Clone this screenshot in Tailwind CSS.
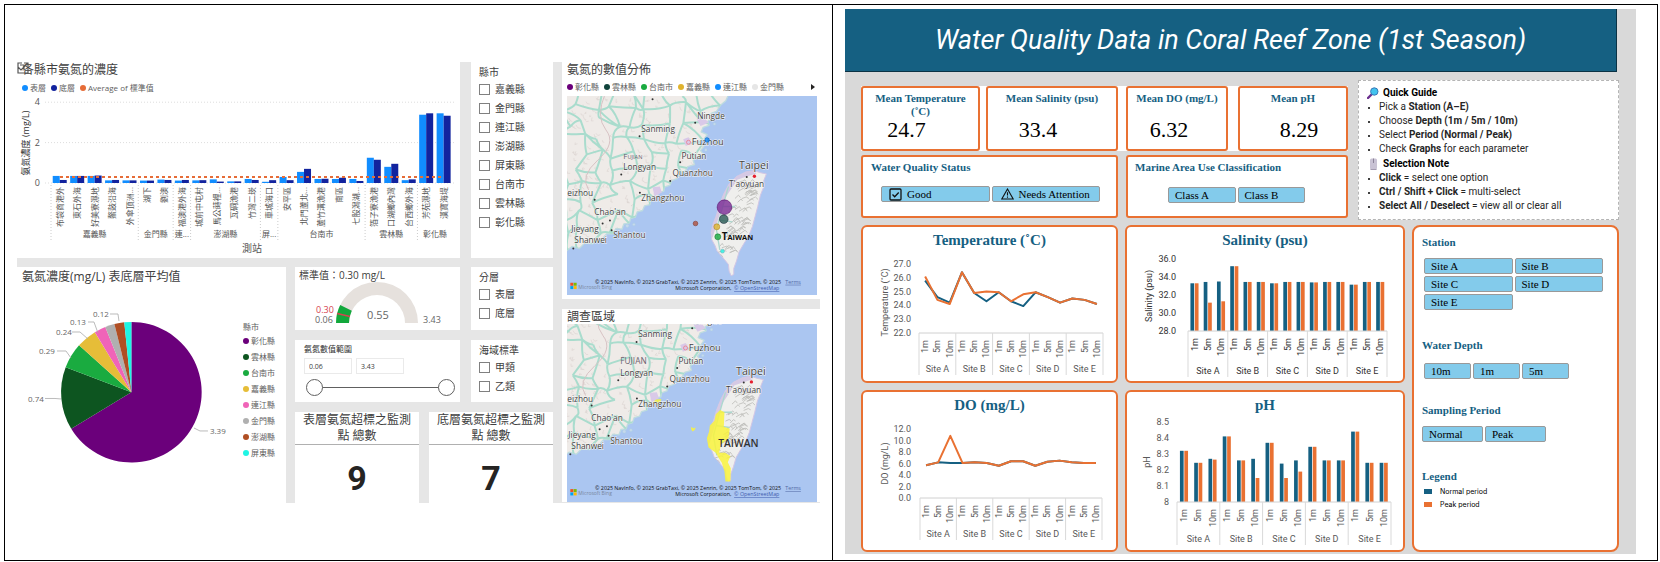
<!DOCTYPE html>
<html lang="zh-Hant">
<head>
<meta charset="utf-8">
<meta name="viewport" content="width=device-width, initial-scale=1">
<title>Water quality dashboards</title>
<script src="https://cdn.jsdelivr.net/npm/@tailwindcss/browser@4"></script>
</head>
<body class="bg-white">
<main class="mt-1 mr-[2px] ml-1 grid grid-cols-[828fr_824fr] border border-black">

  <section class="border-r border-black pt-[57px] pr-[12px] pb-[57px] pl-[12px] font-['Open_Sans','Noto_Sans_CJK_TC',sans-serif] text-[#404040]" aria-label="氨氮">
    <div class="grid grid-cols-[536fr_258fr] gap-[9px] bg-[#e6e6e6]">
      <div class="flex flex-col gap-[9px]">
        <div class="grid grid-cols-[443fr_82fr] gap-[11px]">
          <div class="relative bg-white">
            <svg class="absolute top-0 left-0 h-3 w-3" viewBox="0 0 12 12" fill="none" stroke="#555" stroke-width="1.2"><path d="M5 1H1V11H11V7M1 5L4 8L11 1M7 1H11V5M3 3H7V7"/></svg>
            <h2 class="pl-[5px] text-[12px] leading-4 font-normal">各縣市氨氮的濃度</h2>
            <ul class="flex h-5 items-center gap-[5px] pl-[5px] text-[8px] leading-3 text-[#606060]">
              <li class="flex items-center gap-[2px]"><i class="size-[6px] rounded-full bg-[#118dff]"></i>表層</li>
              <li class="flex items-center gap-[2px]"><i class="size-[6px] rounded-full bg-[#12239e]"></i>底層</li>
              <li class="flex items-center gap-[2px]"><i class="size-[6px] rounded-full bg-[#e66c37]"></i>Average of 標準值</li>
            </ul>
            <svg id="stations" class="block w-full" viewBox="17 98 443 160" font-size="8" fill="#555"></svg>
          </div>
          <fieldset class="bg-white pt-[2px] pl-2 text-[10px]">
            <legend class="float-left w-full leading-4">縣市</legend>
            <div id="counties" class="clear-both"></div>
          </fieldset>
        </div>

        <div class="grid grid-cols-[269fr_258fr] gap-[9px]">
          <div class="bg-white">
            <h2 class="pt-[2px] pl-[5px] text-[12px] leading-4 font-normal">氨氮濃度(mg/L) 表底層平均值</h2>
            <div class="flex">
              <svg id="pie" class="block w-[84%]" viewBox="17 285 226 218" font-size="8" fill="#666"></svg>
              <div class="pt-9 text-[8px] leading-4 text-[#606060]">
                <p class="leading-3">縣市</p>
                <ul>
                  <li class="flex items-center gap-[2px]"><i class="size-[6px] rounded-full bg-[#6b007b]"></i>彰化縣</li>
                  <li class="flex items-center gap-[2px]"><i class="size-[6px] rounded-full bg-[#0d5520]"></i>雲林縣</li>
                  <li class="flex items-center gap-[2px]"><i class="size-[6px] rounded-full bg-[#1aab40]"></i>台南市</li>
                  <li class="flex items-center gap-[2px]"><i class="size-[6px] rounded-full bg-[#e6bd38]"></i>嘉義縣</li>
                  <li class="flex items-center gap-[2px]"><i class="size-[6px] rounded-full bg-[#f064b8]"></i>連江縣</li>
                  <li class="flex items-center gap-[2px]"><i class="size-[6px] rounded-full bg-[#b0b0b0]"></i>金門縣</li>
                  <li class="flex items-center gap-[2px]"><i class="size-[6px] rounded-full bg-[#b04f24]"></i>澎湖縣</li>
                  <li class="flex items-center gap-[2px]"><i class="size-[6px] rounded-full bg-[#1ff5e4]"></i>屏東縣</li>
                </ul>
              </div>
            </div>
          </div>

          <div class="flex flex-col gap-[10px]">
            <div class="grid grid-cols-[165fr_82fr] gap-[11px]">
              <div class="bg-white">
                <h3 class="pl-1 text-[10px] leading-4 font-normal">標準值：0.30 mg/L</h3>
                <svg class="block w-full" viewBox="295 283 165 47" overflow="visible" fill="#666" font-size="9" text-anchor="middle">
                  <path d="M336 323A41 41 0 0 1 418 323H405A28 28 0 0 0 349 323Z" fill="#e6e1dd"/>
                  <path d="M336 323A41 41 0 0 1 340.2 305L351.8 310.7A28 28 0 0 0 349 323Z" fill="#12a83c"/>
                  <path d="M337 313.500L350 316.500" stroke="#d64550" stroke-width="1.500"/>
                  <text x="325" y="313" fill="#d64550">0.30</text>
                  <text x="324" y="323">0.06</text>
                  <text x="378" y="319" font-size="11">0.55</text>
                  <text x="432" y="323">3.43</text>
                </svg>
              </div>
              <fieldset class="bg-white pt-[2px] pl-2 text-[10px]">
                <legend class="float-left w-full leading-4">分層</legend>
                <div id="layers" class="clear-both"></div>
              </fieldset>
            </div>
            <div class="grid grid-cols-[165fr_82fr] gap-[11px]">
              <div class="bg-white pt-[2px] pr-[5px] pb-[6px] pl-[9px]">
                <p class="text-[8px] leading-[14px] text-[#303030]">氨氮數值範圍</p>
                <div class="mt-[2px] flex gap-1">
                  <input aria-label="最小值" value="0.06" class="h-4 w-12 border border-[#eaeaea] px-1 text-[7px]">
                  <input aria-label="最大值" value="3.43" class="h-4 w-12 border border-[#eaeaea] px-1 text-[7px]">
                </div>
                <div class="relative mt-[5px] ml-[2px] flex h-[17px] items-center">
                  <div class="mx-4 h-px flex-1 bg-[#606060]"></div>
                  <input type="range" aria-label="下限" value="0" class="pointer-events-none absolute inset-0 w-full appearance-none bg-transparent [&::-webkit-slider-thumb]:pointer-events-auto [&::-webkit-slider-thumb]:size-[17px] [&::-webkit-slider-thumb]:appearance-none [&::-webkit-slider-thumb]:rounded-full [&::-webkit-slider-thumb]:border [&::-webkit-slider-thumb]:border-solid [&::-webkit-slider-thumb]:border-[#606060] [&::-webkit-slider-thumb]:bg-white">
                  <input type="range" aria-label="上限" value="100" class="pointer-events-none absolute inset-0 w-full appearance-none bg-transparent [&::-webkit-slider-thumb]:pointer-events-auto [&::-webkit-slider-thumb]:size-[17px] [&::-webkit-slider-thumb]:appearance-none [&::-webkit-slider-thumb]:rounded-full [&::-webkit-slider-thumb]:border [&::-webkit-slider-thumb]:border-solid [&::-webkit-slider-thumb]:border-[#606060] [&::-webkit-slider-thumb]:bg-white">
                </div>
              </div>
              <fieldset class="bg-white pt-[2px] pl-2 text-[10px]">
                <legend class="float-left w-full leading-4">海域標準</legend>
                <div id="classes" class="clear-both"></div>
              </fieldset>
            </div>
            <div class="grid flex-1 grid-cols-2 gap-[10px] text-center">
              <div class="flex flex-col bg-white">
                <h3 class="border-b border-[#b0b0b0] text-[12px] leading-4 font-normal">表層氨氮超標之監測<br>點 總數</h3>
                <p class="flex flex-1 items-center justify-center pt-2 font-[Roboto,sans-serif] text-[34px] leading-8 font-bold text-[#252423]">9</p>
              </div>
              <div class="flex flex-col bg-white">
                <h3 class="border-b border-[#b0b0b0] text-[12px] leading-4 font-normal">底層氨氮超標之監測<br>點 總數</h3>
                <p class="flex flex-1 items-center justify-center pt-2 font-[Roboto,sans-serif] text-[34px] leading-8 font-bold text-[#252423]">7</p>
              </div>
            </div>
          </div>
        </div>
      </div>

      <div class="flex flex-col gap-[10px]">
        <div class="bg-white pr-[3px] pb-1 pl-[5px]">
          <h2 class="text-[12px] leading-4 font-normal">氨氮的數值分佈</h2>
          <div class="flex h-[18px] items-center text-[8px] leading-3 text-[#606060]">
            <ul class="flex gap-[5px]">
              <li class="flex items-center gap-[2px]"><i class="size-[6px] rounded-full bg-[#6b007b]"></i>彰化縣</li>
              <li class="flex items-center gap-[2px]"><i class="size-[6px] rounded-full bg-[#11443c]"></i>雲林縣</li>
              <li class="flex items-center gap-[2px]"><i class="size-[6px] rounded-full bg-[#1aab40]"></i>台南市</li>
              <li class="flex items-center gap-[2px]"><i class="size-[6px] rounded-full bg-[#e0b32e]"></i>嘉義縣</li>
              <li class="flex items-center gap-[2px]"><i class="size-[6px] rounded-full bg-[#118dff]"></i>連江縣</li>
              <li class="flex items-center gap-[2px]"><i class="size-[6px] rounded-full bg-[#e6e6e6]"></i>金門縣</li>
            </ul>
            <button class="mr-[2px] ml-auto" aria-label="下一頁"><svg class="h-[6px] w-1" viewBox="0 0 4 6"><path d="M0 0L4 3L0 6Z" fill="#252423"/></svg></button>
          </div>
          <svg id="map-values" class="block w-full" viewBox="35 138 751 597"></svg>
        </div>
        <div class="bg-white pr-[3px] pl-[5px]">
          <h2 class="text-[12px] leading-[15px] font-normal">調查區域</h2>
          <svg id="map-area" class="block w-full" viewBox="44 205 751 537"></svg>
        </div>
      </div>
    </div>
  </section>

  <section class="pt-1 pr-[21px] pb-[5px] pl-[12px]" aria-label="Coral reef zone">
    <div class="bg-[#d9d9d9] pb-[2px]">
      <header class="mr-[19px] flex h-[63px] items-center justify-center border-r border-b border-[#0b3244] bg-[#156082]">
        <h1 class="font-[Roboto,sans-serif] text-[27px] leading-8 font-normal text-white italic">Water Quality Data in Coral Reef Zone (1st Season)</h1>
      </header>
      <div class="pt-2 pr-[17px] pl-4">
        <div class="grid grid-cols-[487fr_261fr] gap-[10px]">
          <div class="flex flex-col gap-1 pt-[6px] pb-[2px] font-['Liberation_Serif',serif]">
            <div class="grid h-[65px] grid-cols-[257fr_222fr] gap-2 bg-white text-center">
              <div class="grid grid-cols-[119fr_132fr] gap-[6px]">
                <div class="rounded-[3px] border-2 border-[#e97132] pt-[4px] pr-9 pl-2">
                  <h3 class="-mr-7 text-[11px] leading-[13px] font-bold text-[#156082]">Mean Temperature (˚C)</h3>
                  <p class="text-[22px] leading-6 text-black">24.7</p>
                </div>
                <div class="flex flex-col justify-between rounded-[3px] border-2 border-[#e97132] pt-[4px] pb-[7px]">
                  <h3 class="text-[11px] leading-[13px] font-bold text-[#156082]">Mean Salinity (psu)</h3>
                  <p class="pr-7 text-[22px] leading-6 text-black">33.4</p>
                </div>
              </div>
              <div class="grid grid-cols-[102fr_110fr] gap-[10px]">
                <div class="flex flex-col justify-between rounded-[3px] border-2 border-[#e97132] pt-[4px] pb-[7px]">
                  <h3 class="text-[11px] leading-[13px] font-bold text-[#156082]">Mean DO (mg/L)</h3>
                  <p class="pr-4 text-[22px] leading-6 text-black">6.32</p>
                </div>
                <div class="flex flex-col justify-between rounded-[3px] border-2 border-[#e97132] pt-[4px] pb-[7px]">
                  <h3 class="text-[11px] leading-[13px] font-bold text-[#156082]">Mean pH</h3>
                  <p class="pl-3 text-[22px] leading-6 text-black">8.29</p>
                </div>
              </div>
            </div>
            <div class="grid flex-1 grid-cols-[257fr_222fr] gap-2 text-[11px]">
              <div class="rounded-[3px] border-2 border-[#e97132] bg-white px-[8px] pt-[4px]">
                <h3 class="leading-[13px] font-bold text-[#156082]">Water Quality Status</h3>
                <div class="mt-[12px] grid grid-cols-2 gap-[2px] pr-[8px] pl-[10px]">
                  <button class="flex h-4 items-center gap-[5px] rounded-[2px] border border-[#999] bg-[#83cbeb] pl-[7px] leading-3"><svg class="size-[13px]" viewBox="0 0 13 13" fill="none" stroke="#111" stroke-width="1.300"><rect x="1" y="1" width="11" height="11" rx="1"/><path d="M3.500 6.500L5.700 8.800L9.700 4.500"/></svg>Good</button>
                  <button class="flex h-4 items-center gap-[5px] rounded-[2px] border border-[#999] bg-[#83cbeb] pl-[8px] leading-3"><svg class="h-3 w-[13px]" viewBox="0 0 13 12" fill="none" stroke="#111" stroke-width="1.100"><path d="M6.500 1L12.200 11H0.800ZM6.500 4.300V7.600M6.500 8.600V9.800"/></svg>Needs Attention</button>
                </div>
              </div>
              <div class="rounded-[3px] border-2 border-[#e97132] bg-white px-[7px] pt-[4px]">
                <h3 class="leading-[13px] font-bold text-[#156082]">Marine Area Use Classification</h3>
                <div class="mt-[13px] grid grid-cols-2 gap-[2px] pr-[34px] pl-[33px]">
                  <button class="h-4 rounded-[2px] border border-[#999] bg-[#83cbeb] pl-[6px] text-left leading-3">Class A</button>
                  <button class="h-4 rounded-[2px] border border-[#999] bg-[#83cbeb] pl-[6px] text-left leading-3">Class B</button>
                </div>
              </div>
            </div>
          </div>
          <div class="border border-dashed border-[#b5b5b5] bg-white pt-[5px] pb-[6px] pl-2 font-[Roboto,sans-serif] text-[10px] leading-[14px] text-[#262626]">
            <h3 class="flex items-center gap-1 font-bold text-black"><svg class="size-[12px]" viewBox="0 0 12 12"><path d="M1 11L5 7" stroke="#6b2f8f" stroke-width="2.400" stroke-linecap="round"/><circle cx="7.300" cy="4.500" r="3.700" fill="#42c3ee" stroke="#3978b8"/></svg>Quick Guide</h3>
            <ul class="list-disc pl-3 marker:text-[8px] marker:text-black">
              <li>Pick a <b>Station (A–E)</b></li>
              <li>Choose <b>Depth (1m / 5m / 10m)</b></li>
              <li>Select <b>Period (Normal / Peak)</b></li>
              <li>Check <b>Graphs</b> for each parameter</li>
            </ul>
            <h3 class="flex items-center gap-1 pt-[1px] font-bold text-black"><svg class="size-[12px]" viewBox="0 0 12 12"><rect x="3" y="0.500" width="7" height="11" rx="1.500" fill="#c9c3d4"/><path d="M6.500 0.500V5" stroke="#8c8499"/><path d="M3.500 11.500H9.500" stroke="#a49cb0"/></svg>Selection Note</h3>
            <ul class="list-disc pl-3 marker:text-[8px] marker:text-black">
              <li><b>Click</b> = select one option</li>
              <li><b>Ctrl / Shift + Click</b> = multi-select</li>
              <li><b>Select All / Deselect</b> = view all or clear all</li>
            </ul>
          </div>
        </div>

        <div class="mt-[5px] grid grid-cols-[257fr_280fr_207fr] gap-[7px] font-['Liberation_Serif',serif]">
          <div class="rounded-md border-2 border-[#e97132] bg-white">
            <h2 class="pt-[3px] text-center text-[15px] leading-5 font-bold text-[#156082]">Temperature (˚C)</h2>
            <svg id="temperature" class="block w-full font-[Roboto,sans-serif]" viewBox="863 250 253 130" font-size="9" fill="#595959"></svg>
          </div>
          <div class="rounded-md border-2 border-[#e97132] bg-white">
            <h2 class="pt-[3px] text-center text-[15px] leading-5 font-bold text-[#156082]">Salinity (psu)</h2>
            <svg id="salinity" class="block w-full font-[Roboto,sans-serif]" viewBox="1127 250 276 131" font-size="9" fill="#333"></svg>
          </div>
          <div class="row-span-2 rounded-lg border-2 border-[#e97132] bg-white pt-2 pl-2 text-[11px]">
            <h3 class="leading-[14px] font-bold text-[#156082]">Station</h3>
            <div class="mt-[9px] mr-[14px] ml-[2px] grid grid-cols-2 gap-[2px]">
              <button class="h-4 rounded-[2px] border border-[#999] bg-[#83cbeb] pl-[6px] text-left leading-3">Site A</button>
              <button class="h-4 rounded-[2px] border border-[#999] bg-[#83cbeb] pl-[6px] text-left leading-3">Site B</button>
              <button class="h-4 rounded-[2px] border border-[#999] bg-[#83cbeb] pl-[6px] text-left leading-3">Site C</button>
              <button class="h-4 rounded-[2px] border border-[#999] bg-[#83cbeb] pl-[6px] text-left leading-3">Site D</button>
              <button class="h-4 rounded-[2px] border border-[#999] bg-[#83cbeb] pl-[6px] text-left leading-3">Site E</button>
            </div>
            <h3 class="mt-[28px] leading-[14px] font-bold text-[#156082]">Water Depth</h3>
            <div class="mt-[11px] ml-[2px] flex gap-[2px]">
              <button class="h-4 w-[47px] rounded-[2px] border border-[#999] bg-[#83cbeb] pl-[6px] text-left leading-3">10m</button>
              <button class="h-4 w-[47px] rounded-[2px] border border-[#999] bg-[#83cbeb] pl-[6px] text-left leading-3">1m</button>
              <button class="h-4 w-[47px] rounded-[2px] border border-[#999] bg-[#83cbeb] pl-[6px] text-left leading-3">5m</button>
            </div>
            <h3 class="mt-6 leading-[14px] font-bold text-[#156082]">Sampling Period</h3>
            <div class="mt-[9px] flex gap-[2px]">
              <button class="h-4 w-[61px] rounded-[2px] border border-[#999] bg-[#83cbeb] pl-[6px] text-left leading-3">Normal</button>
              <button class="h-4 w-[61px] rounded-[2px] border border-[#999] bg-[#83cbeb] pl-[6px] text-left leading-3">Peak</button>
            </div>
            <h3 class="mt-[27px] leading-[14px] font-bold text-[#156082]">Legend</h3>
            <ul class="mt-[2px] ml-[2px] font-[Inter,sans-serif] text-[7px] leading-[13px] text-black">
              <li class="flex items-center gap-2"><i class="h-[5px] w-2 bg-[#156082]"></i>Normal period</li>
              <li class="flex items-center gap-2"><i class="h-[5px] w-2 bg-[#e97132]"></i>Peak period</li>
            </ul>
          </div>
          <div class="rounded-md border-2 border-[#e97132] bg-white">
            <h2 class="pt-[3px] text-center text-[15px] leading-5 font-bold text-[#156082]">DO (mg/L)</h2>
            <svg id="oxygen" class="block w-full font-[Roboto,sans-serif]" viewBox="863 416 253 135" font-size="9" fill="#595959"></svg>
          </div>
          <div class="rounded-md border-2 border-[#e97132] bg-white">
            <h2 class="pt-[3px] text-center text-[15px] leading-5 font-bold text-[#156082]">pH</h2>
            <svg id="acidity" class="block w-full font-[Roboto,sans-serif]" viewBox="1127 416 276 135" font-size="9" fill="#595959"></svg>
          </div>
        </div>
      </div>
    </div>
  </section>
</main>

<script>
const el = id => document.getElementById(id);
const text = (x, y, s, extra = '') => `<text x="${x}" y="${y}" ${extra}>${s}</text>`;
const upright = (x, y, s, extra = '') => `<text transform="translate(${x} ${y}) rotate(-90)" ${extra}>${s}</text>`;
const line = (x1, y1, x2, y2, extra) => `<path d="M${x1} ${y1}L${x2} ${y2}" ${extra}/>`;

/* Slicer check boxes */
const checks = (id, names) => {
  el(id).innerHTML = names.map(n => `<label class="flex h-[19px] items-center gap-[5px]"><input type="checkbox" class="size-[11px] appearance-none border border-[#808080] bg-white checked:bg-[#404040]">${n}</label>`).join('');
};
checks('counties', ['嘉義縣', '金門縣', '連江縣', '澎湖縣', '屏東縣', '台南市', '雲林縣', '彰化縣']);
checks('layers', ['表層', '底層']);
checks('classes', ['甲類', '乙類']);

/* Ammonia by station */
(() => {
  const rows = [['布袋商港外', .35, .15], ['東石外海', .35, .35], ['好美寮濕地', .35, .37], ['鰲鼓沿海', .13, .15], ['外傘頂洲...', .13, .13],
    ['湖下', .12, .12], ['劉澳', .17, .15], ['福澳港外海', .12, .15], ['城前中屯村', .13, .14], ['馬公蒔裡...', .18, .07], ['瓦硐漁港', .08, .08],
    ['竹灣二崁', .2, .15], ['車城海口', .06, .14], ['安平區', .3, .14], ['北門蘆北...', .55, .7], ['蘆竹溝漁港', .2, .21], ['南區', .2, .26],
    ['七股潟湖...', .2, .1], ['箔子寮漁港', 1.25, 1.15], ['口湖鄉內灣', .8, .95], ['台西鄉外海', .14, .18], ['芳苑濕地', 3.38, 3.45], ['漢寶海堤', 3.45, 3.33]];
  const groups = [['嘉義縣', 5], ['金門縣', 2], ['連...', 1], ['澎湖縣', 4], ['屏...', 1], ['台南市', 5], ['雲林縣', 3], ['彰化縣', 2]];
  const pitch = 17.45, x0 = 51, base = 183, unit = 20.2;
  let s = '';
  for (const v of [0, 2, 4]) {
    s += text(40, base - v * unit + 3, v, 'text-anchor="end" font-size="9"');
    s += line(45, base - v * unit, 455, base - v * unit, 'stroke="#ddd" stroke-dasharray="1 2"');
  }
  rows.forEach(([name, a, b], i) => {
    const c = x0 + (i + .5) * pitch;
    s += `<rect x="${c - 7}" y="${base - a * unit}" width="7" height="${a * unit}" fill="#118dff"/><rect x="${c}" y="${base - b * unit}" width="7" height="${b * unit}" fill="#12239e"/>`;
    s += upright(c + 3, 187, name, 'text-anchor="end"');
  });
  let n = 0;
  for (const [name, count] of groups) {
    const x = x0 + n * pitch;
    s += line(x, 185, x, 242, 'stroke="#ccc" stroke-dasharray="1 2"') + text(x + count * pitch / 2, 237, name, 'text-anchor="middle"');
    n += count;
  }
  s += line(60, 177, 444, 177, 'stroke="#e66c37" stroke-width="2" stroke-dasharray="3 3"');
  s += upright(29, 143, '氨氮濃度 (mg/L)', 'text-anchor="middle" font-size="9" fill="#333"') + text(252, 252, '測站', 'text-anchor="middle" font-size="10"');
  el('stations').innerHTML = s;
})();

/* County share */
(() => {
  const cx = 131.4, cy = 392.3, r = 70.3;
  const ends = [238.8, 290.8, 311.9, 328.7, 338.2, 346, 354.2, 360];
  const fills = ['#6b007b', '#0d5520', '#1aab40', '#e6bd38', '#f064b8', '#b0b0b0', '#b04f24', '#1ff5e4'];
  const at = d => `${cx + r * Math.sin(d * Math.PI / 180)} ${cy - r * Math.cos(d * Math.PI / 180)}`;
  let from = 0, s = '';
  ends.forEach((d, i) => {
    s += `<path d="M${cx} ${cy}L${at(from)}A${r} ${r} 0 ${d - from > 180 ? 1 : 0} 1 ${at(d)}Z" fill="${fills[i]}"/>`;
    from = d;
  });
  s += '<g fill="none" stroke="#aaa" stroke-width=".8"><path d="M194 428L200 431H208M61 399L55 398.500H45M71 358L66 351H57M88 339L80 332H72M98 333L94 322H88M119 321L118 314H110"/></g>';
  s += text(210, 434, '3.39') + text(28, 402, '0.74') + text(39, 354, '0.29') + text(56, 335, '0.24') + text(70, 325, '0.13') + text(93, 317, '0.12');
  el('pie').innerHTML = s;
})();

/* Site and depth charts */
const chart = (id, o) => {
  const { left, right, top, base, foot, ticks, digits, title, tx, lx, normal, peak, bars } = o;
  const pitch = (right - left) / 15, lo = ticks[0], hi = ticks[ticks.length - 1];
  const y = v => base - (v - lo) / (hi - lo) * (base - top);
  let s = ticks.map((v, i) => text(lx, y(v) + 3, v === 8 ? (bars ? '8' : '8.0') : v.toFixed(digits), 'text-anchor="end"')).join('');
  s += upright(tx, (top + base) / 2 + o.shift, title, 'text-anchor="middle"');
  const xs = normal.map((_, i) => left + (i + .5) * pitch);
  if (bars) {
    xs.forEach((x, i) => {
      s += `<rect x="${x - 4.2}" y="${y(normal[i])}" width="3.700" height="${base - y(normal[i])}" fill="#156082"/><rect x="${x + .2}" y="${y(peak[i])}" width="3.700" height="${base - y(peak[i])}" fill="#e97132"/>`;
    });
  } else {
    for (const [vals, c] of [[normal, '#156082'], [peak, '#e97132']])
      s += `<polyline fill="none" stroke="${c}" stroke-width="2" stroke-linejoin="round" points="${vals.map((v, i) => xs[i] + ',' + y(v)).join(' ')}"/>`;
  }
  s += line(left, base, right, base, 'stroke="#d0d0d0"');
  for (let g = 0; g <= 5; g++) s += line(left + g * 3 * pitch, base, left + g * 3 * pitch, foot, 'stroke="#d9d9d9"');
  xs.forEach((x, i) => { s += upright(x + 3, base + 7, ['1m', '5m', '10m'][i % 3], 'text-anchor="end"'); });
  ['A', 'B', 'C', 'D', 'E'].forEach((n, g) => { s += text(left + (g * 3 + 1.5) * pitch, foot - 3, 'Site ' + n, 'text-anchor="middle"'); });
  el(id).innerHTML = s;
};
chart('temperature', { left: 919, right: 1103, top: 264, base: 333, foot: 375, ticks: [22, 23, 24, 25, 26, 27], digits: 1, title: 'Temperature (˚C)', tx: 888, lx: 911, shift: 4,
  normal: [25.8, 24.6, 24.2, 26.4, 24.9, 24.3, 24.95, 24.3, 23.95, 24.95, 24.6, 24.2, 24.5, 24.4, 24.1],
  peak: [26.1, 24.4, 24.1, 26.4, 24.9, 25, 24.95, 24.3, 24.8, 24.95, 24.6, 24.2, 24.5, 24.4, 24.1] });
chart('oxygen', { left: 920, right: 1102, top: 430, base: 499, foot: 541, ticks: [0, 2, 4, 6, 8, 10, 12], digits: 1, title: 'DO (mg/L)', tx: 888, lx: 911, shift: 0,
  normal: [5.7, 6.2, 6.1, 6.1, 6.2, 6.1, 5.6, 6.4, 6.4, 5.6, 6.3, 6.5, 6.2, 6.1, 6.1],
  peak: [5.7, 6.2, 10.8, 6.1, 6.2, 6.1, 5.6, 6.4, 6.4, 5.6, 6.3, 6.5, 6.2, 6.1, 6.1] });
chart('salinity', { left: 1188, right: 1387, top: 259, base: 331, foot: 377, ticks: [28, 30, 32, 34, 36], digits: 1, title: 'Salinity (psu)', tx: 1152, lx: 1176, shift: 1, bars: true,
  normal: [33.3, 33.45, 33.5, 35.2, 33.45, 33.45, 33.3, 33.45, 33.45, 33.4, 33.45, 33.45, 33.15, 33.45, 33.45],
  peak: [33.3, 31.15, 31.3, 35.2, 33.45, 33.45, 33.3, 33.45, 33.45, 33.4, 33.45, 33.45, 33.15, 33.45, 33.45] });
chart('acidity', { left: 1177, right: 1391, top: 423, base: 503, foot: 546, ticks: [8, 8.1, 8.2, 8.3, 8.4, 8.5], digits: 1, title: 'pH', tx: 1150, lx: 1169, shift: 0, bars: true,
  normal: [8.32, 8.245, 8.27, 8.41, 8.26, 8.27, 8.37, 8.24, 8.26, 8.345, 8.26, 8.26, 8.44, 8.245, 8.245],
  peak: [8.32, 8.245, 8.265, 8.41, 8.26, 8.15, 8.37, 8.15, 8.19, 8.345, 8.26, 8.26, 8.44, 8.245, 8.245] });

/* Taiwan Strait base map, in its own units (three to a pixel) */
const coast = 'M30 130H522L512 152 496 166 484 184 468 190 470 206 458 214 462 226 444 232 438 246 456 254 446 268 430 276 446 290 436 302 448 316 428 320 414 332 418 344 398 350 390 364 374 370 366 386 350 392 344 406 328 412 326 424 310 428 304 442 288 446 284 464 268 468 262 482 246 486 240 502 226 506 222 520 206 522 200 538 182 536 172 552 154 552 142 566 122 570 112 582 88 580 72 596 50 590 30 606Z';
const island = 'M598 362L614 368 634 372 626 392 628 406 616 436 608 470 600 500 592 530 580 560 566 582 552 606 544 634 536 656 536 674 528 678 522 664 520 644 502 622 486 604 480 588 470 570 468 548 474 522 484 496 494 462 506 432 522 402 544 380 572 366Z';
const baseMap = key => {
  let seed = 11;
  const rnd = () => (seed = (seed * 16807) % 2147483647) / 2147483647;
  const node = [];
  for (let j = 0; j < 12; j++) for (let i = 0; i < 12; i++) node.push([10 + i * 50 + rnd() * 36, 110 + j * 46 + rnd() * 34]);
  let roads = '', hills = '', ridges = '';
  const join = (a, b) => { roads += `M${a[0]} ${a[1]}Q${(a[0] + b[0]) / 2 + rnd() * 20 - 10} ${(a[1] + b[1]) / 2 + rnd() * 20 - 10} ${b[0]} ${b[1]}`; };
  for (let j = 0; j < 11; j++) for (let i = 0; i < 11; i++) {
    const k = j * 12 + i;
    if (rnd() < .8) join(node[k], node[k + 1]);
    if (rnd() < .8) join(node[k], node[k + 12]);
    if (rnd() < .18) join(node[k], node[k + 13]);
  }
  for (let i = 0; i < 300; i++) { const x = 35 + rnd() * 460, y = 135 + rnd() * 460; hills += `M${x} ${y}l${rnd() * 12 - 6} ${4 + rnd() * 7}l${4 + rnd() * 5} ${rnd() * 6 - 3}`; }
  for (let i = 0; i < 75; i++) { const y = 395 + rnd() * 225, x = 600 - (y - 395) * .28 - rnd() * 55; ridges += `M${x} ${y}l${8 + rnd() * 12} ${-4 - rnd() * 8}l${3 + rnd() * 5} ${3 + rnd() * 5}`; }
  return `<defs><clipPath id="${key}"><path d="${coast}"/></clipPath><clipPath id="${key}-i"><path d="${island}"/></clipPath></defs>
  <path d="M0 100H900V800H0Z" fill="#abc6f1"/>
  <path d="${coast}" fill="#efebe8" stroke="#bfdcdf" stroke-width="4" stroke-linejoin="round"/>
  <g clip-path="url(#${key})" fill="none"><path d="${hills}" stroke="#dcd5d2" stroke-width="2"/><path d="${roads}" stroke="#a9dccd" stroke-width="6"/><path d="M150 130Q120 200 152 240T128 330T100 420" stroke="#d7c2c4" stroke-width="3"/></g>
  <path d="M292 412l22-2 6 18-22 12zM424 206l26 0 10 12-24 10zM384 268l16-6 10 18-18 8z" fill="#d9c9e8"/>
  <g fill="#c6d7ee" stroke="#a7d5d5"><circle cx="452" cy="300" r="4"/><circle cx="404" cy="362" r="4"/><circle cx="216" cy="528" r="5"/><circle cx="236" cy="524" r="4"/><circle cx="478" cy="222" r="4"/></g>
  <path d="${island}" fill="#efefed" stroke="#d3c6e4" stroke-width="3"/>
  <g clip-path="url(#${key}-i)" fill="none"><path d="M600 360L540 380 500 440 480 500 462 560" stroke="#d5c9e4" stroke-width="22"/><path d="${ridges}" stroke="#bdbdb9" stroke-width="2.500"/><path d="M520 410L500 480 484 540 494 600M500 470H540M490 510L532 516" stroke="#acd8cf" stroke-width="4"/></g>`;
};
const places = (dx, dy) => {
  const dots = [[292, 148], [420, 218], [253, 259], [375, 337], [345, 393], [198, 374], [254, 429], [118, 450], [164, 512], [142, 521], [169, 541], [54, 596], [575, 381]];
  const names = [['Ningde', 426, 206, 25], ['Sanming', 258, 245, 25], ['Fuzhou', 410, 285, 28], ['Putian', 379, 326, 25], ['Longyan', 204, 361, 25], ['Quanzhou', 352, 379, 25], ['Taipei', 552, 357, 32], ["T'aoyuan", 522, 411, 25], ['Zhangzhou', 258, 454, 25], ['eizhou', 36 + dx, 438, 25], ["Chao'an", 117, 497, 25], ['Jieyang', 48, 547, 25], ['Shantou', 174, 566, 25], ['Shanwei', 57, 580, 25]];
  return '<g fill="#333">' + dots.map(([x, y]) => `<circle cx="${x}" cy="${y}" r="3"/>`).join('') + '</g><circle cx="400" cy="277" r="6" fill="none" stroke="#e88b9c" stroke-width="3"/><circle cx="598" cy="379" r="5" fill="#e5202f"/>' +
    '<g fill="#414141" stroke="#f6f6f6" stroke-width="3" paint-order="stroke">' + names.map(([n, x, y, f]) => text(x, y, n, `font-size="${f}"`)).join('') + '</g>';
};
const credit = (x, y) => `<g transform="translate(${x} ${y})" font-size="16" fill="#111">
  <path d="M10-37h9v9h-9z" fill="#f25022"/><path d="M20-37h9v9h-9z" fill="#7fba00"/><path d="M10-27h9v9h-9z" fill="#00a4ef"/><path d="M20-27h9v9h-9z" fill="#ffb900"/>
  <text x="34" y="-19" fill="#7a86a0" font-size="15">Microsoft Bing</text>
  <text x="643" y="-34" text-anchor="end">© 2025 NavInfo, © 2025 GrabTaxi, © 2025 Zenrin, © 2025 TomTom, © 2025</text>
  <a href="#terms"><text x="656" y="-34" fill="#5269a5" text-decoration="underline">Terms</text></a>
  <text x="494" y="-15" text-anchor="end">Microsoft Corporation,</text>
  <a href="#osm"><text x="502" y="-15" fill="#3f5cae" text-decoration="underline">© OpenStreetMap</text></a></g>`;

el('map-values').innerHTML = baseMap('land-a') + places(0, 0) +
  text(204, 326, 'F<tspan font-size="17">UJIAN</tspan>', 'font-size="24" fill="#6c6470"') +
  '<g fill-opacity=".8" stroke-width="1.500"><circle cx="508" cy="472" r="22" fill="#7a2a95" stroke="#4c0060"/><circle cx="506" cy="508" r="13" fill="#2b5a55" stroke="#123"/><circle cx="485" cy="531" r="9" fill="#e0b32e" stroke="#a67c10"/><circle cx="488" cy="561" r="9" fill="#1aab40" stroke="#0c6d26"/><circle cx="421" cy="521" r="7" fill="#b0503c" stroke="#7a2c20"/><circle cx="502" cy="604" r="6" fill="#1ff5e4" stroke="#7ab"/><circle cx="456" cy="270" r="7" fill="#118dff" stroke="#0a5cb0"/></g>' +
  text(500, 572, 'T<tspan font-size="22">AIWAN</tspan>', 'font-size="30" font-weight="bold" fill="#111"') + credit(35, 736);

el('map-area').innerHTML = baseMap('land-b') +
  '<g transform="translate(9 118)" fill="#f9f33c" fill-opacity=".85"><path d="M495 345L482 358 478 378 464 392 462 410 455 430 460 458 482 474 490 488 500 504 508 530 511 560 526 560 527 520 518 502 526 484 510 474 492 474 498 448 520 430 524 402 506 396 508 352Z"/><path d="M293 322L302 314 318 312 316 324 304 328ZM408 396l6 4 8-2-4 8-6 4-4-6z"/></g>' +
  places(9, 0) + text(204, 326, 'FUJIAN', 'font-size="25" fill="#6c6470"') +
  text(498, 576, 'TAIWAN', 'font-size="31" font-weight="600" fill="#333"') + credit(44, 738);
</script>
</body>
</html>
